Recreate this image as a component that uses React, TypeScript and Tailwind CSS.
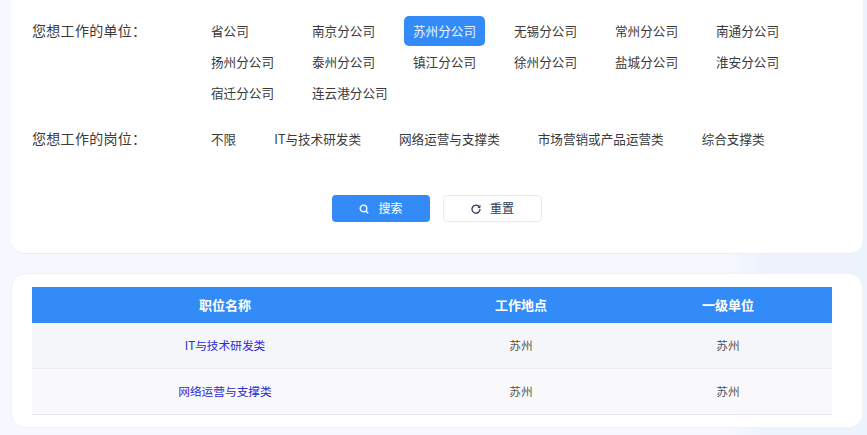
import React from 'react';

const units = [
  '省公司', '南京分公司', '苏州分公司', '无锡分公司', '常州分公司', '南通分公司',
  '扬州分公司', '泰州分公司', '镇江分公司', '徐州分公司', '盐城分公司', '淮安分公司',
  '宿迁分公司', '连云港分公司',
];
const jobs = ['不限', 'IT与技术研发类', '网络运营与支撑类', '市场营销或产品运营类', '综合支撑类'];
const rows = [
  { name: 'IT与技术研发类', bg: 'bg-[#f5f6fa]' },
  { name: '网络运营与支撑类', bg: 'bg-[#f9f9fb]' },
];

export default function App() {
  return (
    <div className="w-[867px] h-[435px] overflow-hidden bg-gradient-to-r from-[#f5f8fe] from-[84%] to-[#edf3fd] to-[88%] pl-[11px] pr-[4px] text-[12.6px] text-[#3a3a3a] font-['Noto_Sans_CJK_SC','Noto_Sans',sans-serif]">
      {/* Filter card */}
      <div className="h-[254px] bg-white rounded-b-[14px] border-b border-[#e9eef7] pl-[21px] pt-[16px]">
        <div className="flex">
          <div className="w-[170px] shrink-0 h-[30px] leading-[29px] text-[14px] tracking-[0.3px]">您想工作的单位：</div>
          <div className="flex flex-wrap w-[640px] gap-y-[1px]">
            {units.map((u) => (
              <div key={u} className="w-[101px] h-[30px]">
                <span
                  className={
                    u === '苏州分公司'
                      ? 'inline-block h-[30px] leading-[29px] px-[9px] rounded-[5px] bg-[#338bf8] text-white/90 whitespace-nowrap'
                      : 'inline-block h-[30px] leading-[29px] px-[9px] whitespace-nowrap'
                  }
                >
                  {u}
                </span>
              </div>
            ))}
          </div>
        </div>
        <div className="flex mt-[16px]">
          <div className="w-[170px] shrink-0 h-[30px] leading-[29px] text-[14px] tracking-[0.3px]">您想工作的岗位：</div>
          <div className="flex gap-[20px]">
            {jobs.map((j) => (
              <span key={j} className="h-[30px] leading-[29px] px-[9px] whitespace-nowrap">{j}</span>
            ))}
          </div>
        </div>
        <div className="flex justify-center gap-[13px] mt-[41px] pr-[21px]">
          <button className="w-[98px] h-[27px] rounded-[4px] bg-[#338bf8] text-white text-[12px] flex items-center justify-center gap-[9px]">
            <svg width="10" height="10" viewBox="0 0 10 10" fill="none" stroke="currentColor" strokeWidth="1.3">
              <circle cx="4.5" cy="4.5" r="3.3" />
              <path d="M7 7l2.2 2.2" />
            </svg>
            <span className="pb-[2px]">搜索</span>
          </button>
          <button className="w-[99px] h-[27px] rounded-[4px] bg-white border border-[#e8ebf2] text-[#2c3a55] text-[12px] flex items-center justify-center gap-[9px]">
            <svg width="10" height="10" viewBox="0 0 10 10" fill="none" stroke="currentColor" strokeWidth="1.3">
              <path d="M8.6 3.4A4 4 0 1 0 9 5" />
              <path d="M9 1.2v2.4H6.8" strokeWidth="1" />
            </svg>
            <span className="pb-[2px]">重置</span>
          </button>
        </div>
      </div>

      {/* Result table card */}
      <div className="mt-[19px] h-[155px] bg-white rounded-[14px] border border-[#eef2f9] pl-[20px] pr-[30px] pt-[13px]">
        <div className="w-[800px]">
          <div className="grid grid-cols-[386px_206px_208px] h-[36px] items-center text-center bg-[#338bf8] text-white font-bold text-[13px]">
            <div>职位名称</div>
            <div>工作地点</div>
            <div>一级单位</div>
          </div>
          {rows.map((r) => (
            <div
              key={r.name}
              className={`grid grid-cols-[386px_206px_208px] h-[46px] items-center text-center text-[11.7px] border-b border-[#e9ebef] ${r.bg}`}
            >
              <div className="text-[#2a2ad8] pb-[2px]">{r.name}</div>
              <div className="text-[#555555] pb-[2px]">苏州</div>
              <div className="text-[#555555] pb-[2px]">苏州</div>
            </div>
          ))}
        </div>
      </div>
    </div>
  );
}
